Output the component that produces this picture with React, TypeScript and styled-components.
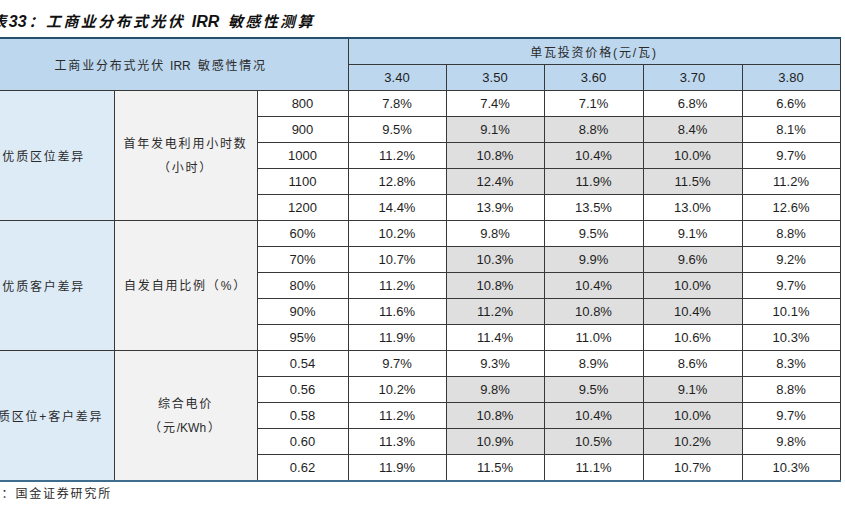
import React from "react";
import styled, { createGlobalStyle } from "styled-components";

const Global = createGlobalStyle`
  html, body { margin: 0; padding: 0; background: #ffffff; overflow: hidden; }
  body { font-family: "Liberation Sans", "Noto Sans CJK SC", sans-serif; color: #1a1a1a; }
`;

const Page = styled.div`
  margin-left: -26px;
  padding-top: 12px;
  width: 866px;
`;

const Title = styled.div`
  font-family: "Liberation Sans", "Noto Sans CJK SC", sans-serif;
  font-size: 15px;
  font-weight: 700;
  font-style: italic;
  line-height: 20px;
  letter-spacing: 2.4px;
  color: #111;
  margin-bottom: 5px;
  white-space: nowrap;
`;

const Latin = styled.span<{ $size?: number }>`
  letter-spacing: 0;
  margin-right: 2px;
  ${(p) => (p.$size ? `font-size: ${p.$size}px;` : "")}
`;

const Table = styled.table`
  width: 866px;
  table-layout: fixed;
  border-collapse: collapse;
  border-top: 2px solid #24506e;
  border-bottom: 2px solid #3f6d8d;
  font-size: 13px;
`;

const Cell = styled.td<{ $bg?: string }>`
  height: 25px;
  padding: 0;
  border: 1px solid #383838;
  text-align: center;
  vertical-align: middle;
  background: ${(p) => p.$bg ?? "#ffffff"};
  color: #1e1e1e;
  white-space: nowrap;
`;

const HeadCell = styled(Cell)`
  background: #bdd7ee;
  border-top: none;
`;

const CnText = styled.span`
  font-family: "Liberation Sans", "Noto Sans CJK SC", sans-serif;
  font-size: 12px;
  letter-spacing: 1.8px;
  color: #2a2a2a;
`;

const TwoLine = styled.div`
  display: flex;
  flex-direction: column;
  align-items: center;
  line-height: 24px;
`;

const Footer = styled.div`
  margin-top: 3px;
  font-size: 12px;
  line-height: 18px;
  letter-spacing: 1.8px;
  color: #2a2a2a;
  white-space: nowrap;
`;

type Group = {
  label: React.ReactNode;
  id: string;
  param: React.ReactNode[];
  rows: { key: string; vals: string[] }[];
};

const groups: Group[] = [
  {
    id: "a",
    label: "优质区位差异",
    param: ["首年发电利用小时数", "（小时）"],
    rows: [
      { key: "800", vals: ["7.8%", "7.4%", "7.1%", "6.8%", "6.6%"] },
      { key: "900", vals: ["9.5%", "9.1%", "8.8%", "8.4%", "8.1%"] },
      { key: "1000", vals: ["11.2%", "10.8%", "10.4%", "10.0%", "9.7%"] },
      { key: "1100", vals: ["12.8%", "12.4%", "11.9%", "11.5%", "11.2%"] },
      { key: "1200", vals: ["14.4%", "13.9%", "13.5%", "13.0%", "12.6%"] },
    ],
  },
  {
    id: "b",
    label: "优质客户差异",
    param: ["自发自用比例（%）"],
    rows: [
      { key: "60%", vals: ["10.2%", "9.8%", "9.5%", "9.1%", "8.8%"] },
      { key: "70%", vals: ["10.7%", "10.3%", "9.9%", "9.6%", "9.2%"] },
      { key: "80%", vals: ["11.2%", "10.8%", "10.4%", "10.0%", "9.7%"] },
      { key: "90%", vals: ["11.6%", "11.2%", "10.8%", "10.4%", "10.1%"] },
      { key: "95%", vals: ["11.9%", "11.4%", "11.0%", "10.6%", "10.3%"] },
    ],
  },
  {
    id: "c",
    label: "优质区位+客户差异",
    param: [
      "综合电价",
      <>
        （元<Latin>/KWh</Latin>）
      </>,
    ],
    rows: [
      { key: "0.54", vals: ["9.7%", "9.3%", "8.9%", "8.6%", "8.3%"] },
      { key: "0.56", vals: ["10.2%", "9.8%", "9.5%", "9.1%", "8.8%"] },
      { key: "0.58", vals: ["11.2%", "10.8%", "10.4%", "10.0%", "9.7%"] },
      { key: "0.60", vals: ["11.3%", "10.9%", "10.5%", "10.2%", "9.8%"] },
      { key: "0.62", vals: ["11.9%", "11.5%", "11.1%", "10.7%", "10.3%"] },
    ],
  },
];

const prices = ["3.40", "3.50", "3.60", "3.70", "3.80"];
const colWidths = [140, 143, 91, 98, 98, 99, 99, 98];

export default function App() {
  return (
    <>
      <Global />
      <Page>
        <Title>
          图表<Latin $size={16}>33</Latin>：工商业分布式光伏 <Latin $size={16}>IRR</Latin> 敏感性测算
        </Title>
        <Table>
          <colgroup>
            {colWidths.map((w, i) => (
              <col key={i} style={{ width: w }} />
            ))}
          </colgroup>
          <tbody>
            <tr>
              <HeadCell colSpan={3} rowSpan={2} style={{ borderLeft: "none" }}>
                <CnText>
                  工商业分布式光伏 <Latin>IRR</Latin> 敏感性情况
                </CnText>
              </HeadCell>
              <HeadCell colSpan={5}>
                <CnText>
                  单瓦投资价格<Latin>(</Latin>元<Latin>/</Latin>瓦<Latin>)</Latin>
                </CnText>
              </HeadCell>
            </tr>
            <tr>
              {prices.map((p) => (
                <HeadCell key={p} style={{ borderTop: "1px solid #383838" }}>{p}</HeadCell>
              ))}
            </tr>
            {groups.map((g) =>
              g.rows.map((r, ri) => (
                <tr key={g.id + r.key}>
                  {ri === 0 && (
                    <>
                      <Cell rowSpan={5} $bg="#ddebf7" style={{ borderLeft: "none" }}>
                        <CnText>{g.label}</CnText>
                      </Cell>
                      <Cell rowSpan={5} $bg="#f2f2f2">
                        <TwoLine>
                          {g.param.map((t, ti) => (
                            <CnText key={ti}>{t}</CnText>
                          ))}
                        </TwoLine>
                      </Cell>
                    </>
                  )}
                  <Cell>{r.key}</Cell>
                  {r.vals.map((v, vi) => (
                    <Cell
                      key={vi}
                      $bg={ri >= 1 && ri <= 3 && vi >= 1 && vi <= 3 ? "#dfdfdf" : "#ffffff"}
                    >
                      {v}
                    </Cell>
                  ))}
                </tr>
              ))
            )}
          </tbody>
        </Table>
        <Footer>来源：国金证券研究所</Footer>
      </Page>
    </>
  );
}
